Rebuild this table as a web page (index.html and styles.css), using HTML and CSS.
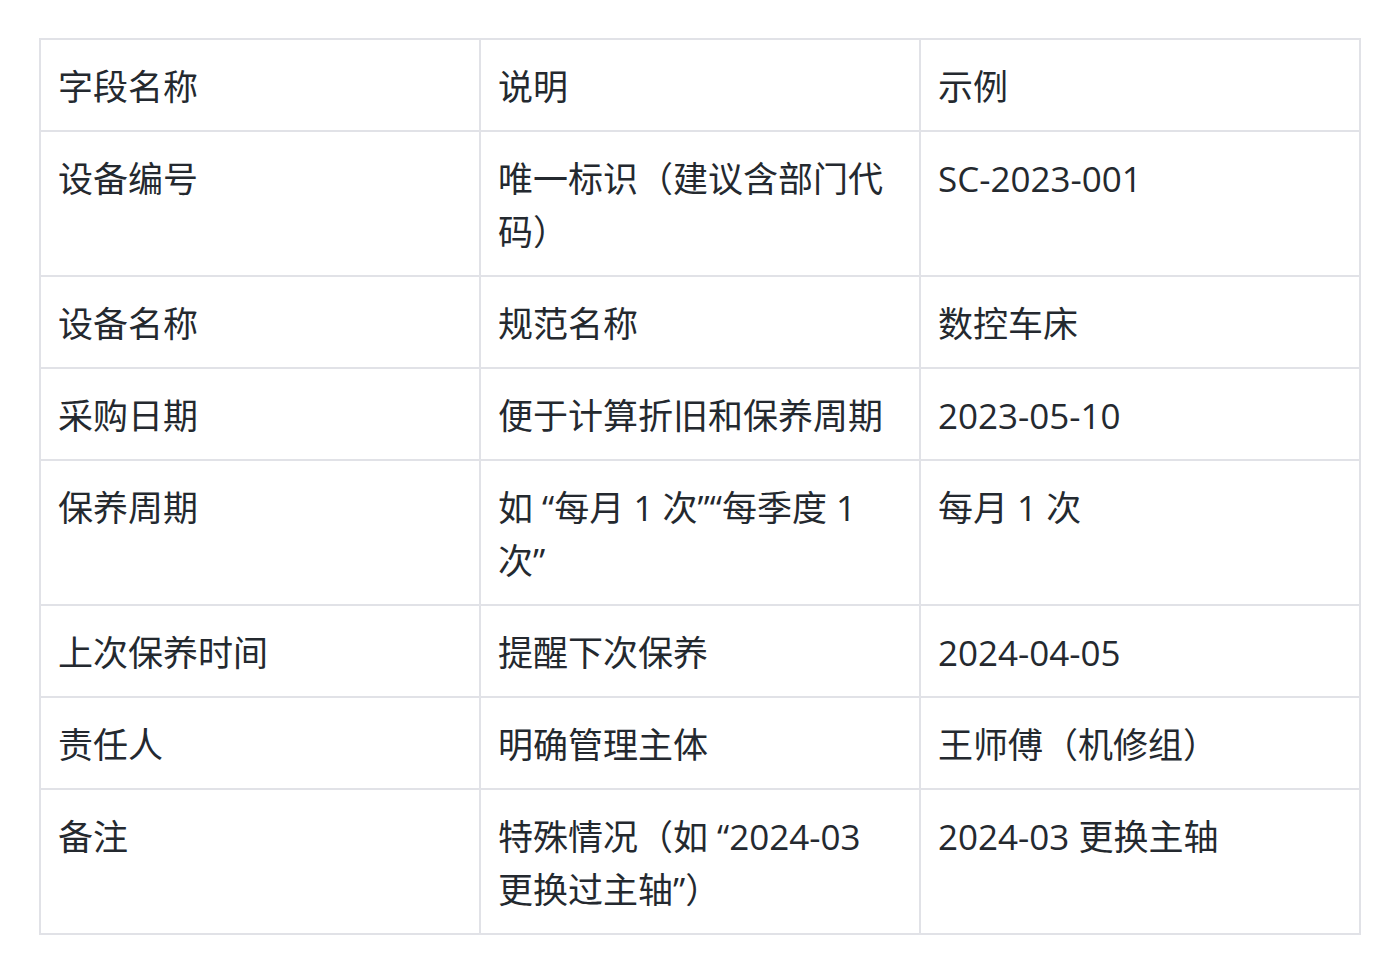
FILE: index.html
```html
<!DOCTYPE html>
<html lang="zh">
<head>
<meta charset="utf-8">
<link rel="stylesheet" href="styles.css">
</head>
<body>
<table class="spec">
  <colgroup><col class="c"><col class="c"><col class="c"></colgroup>
  <tr><td>字段名称</td><td>说明</td><td>示例</td></tr>
  <tr><td>设备编号</td><td>唯一标识（建议含部门代码）</td><td>SC-2023-001</td></tr>
  <tr><td>设备名称</td><td>规范名称</td><td>数控车床</td></tr>
  <tr><td>采购日期</td><td>便于计算折旧和保养周期</td><td>2023-05-10</td></tr>
  <tr><td>保养周期</td><td>如 “每月 1 次”“每季度 1 次”</td><td>每月 1 次</td></tr>
  <tr><td>上次保养时间</td><td>提醒下次保养</td><td>2024-04-05</td></tr>
  <tr><td>责任人</td><td>明确管理主体</td><td>王师傅（机修组）</td></tr>
  <tr><td>备注</td><td>特殊情况（如 “2024-03 更换过主轴”）</td><td>2024-03 更换主轴</td></tr>
</table>
</body>
</html>
```
FILE: styles.css
```css
html, body {
  margin: 0;
  background: #ffffff;
}
body {
  padding: 38px 0 0 39px;
  font-family: "Open Sans", "Noto Sans CJK SC", sans-serif;
  font-size: 35px;
  line-height: 53px;
  color: #24292f;
}
.spec {
  border-collapse: collapse;
  table-layout: fixed;
  width: 1322px;
}
.spec .c {
  width: 33.333%;
}
.spec td {
  border: 2px solid #e1e2e7;
  padding: 20px 17px 17px;
  vertical-align: top;
  text-align: left;
}
```
